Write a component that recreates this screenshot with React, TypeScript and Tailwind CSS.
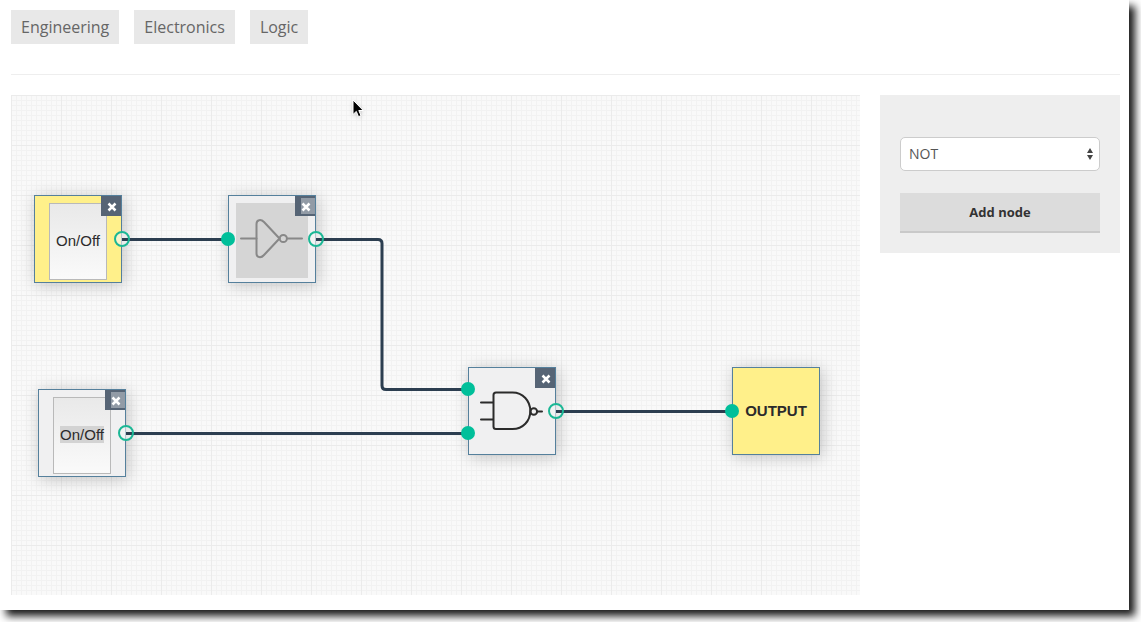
import { useState } from "react";
import clsx from "clsx";

type Kind = "switch" | "not" | "nand" | "output";

interface GateNode {
  id: string;
  kind: Kind;
  x: number;
  y: number;
  on?: boolean;
  selected?: boolean;
}

const initialNodes: GateNode[] = [
  { id: "a", kind: "switch", x: 23, y: 100, on: true },
  { id: "b", kind: "switch", x: 27, y: 294, selected: true },
  { id: "not", kind: "not", x: 217, y: 100, selected: true },
  { id: "nand", kind: "nand", x: 457, y: 272 },
  { id: "out", kind: "output", x: 721, y: 272, on: true },
];

const wires = [
  "M111 144.5H217",
  "M305 144.5H367Q371 144.5 371 148.5V290.5Q371 294.5 375 294.5H457",
  "M115 338.5H457",
  "M545 316.5H721",
];

const inputs = [
  [217, 144],
  [457, 294],
  [457, 338],
  [721, 316],
];

const outputs = [
  [111, 144],
  [115, 338],
  [305, 144],
  [545, 316],
];

function NotIcon() {
  return (
    <svg viewBox="8 8 72 75" className="h-[75px] w-[72px]" fill="none" stroke="#888" strokeWidth="2" strokeLinecap="round" strokeLinejoin="round">
      <path d="M13 43.5H28.5M59 43.5H74" />
      <path d="M28.5 29C28.5 24.5 33 24 36 27L51.5 43.5L36 60C33 63.5 28.5 62.5 28.5 58.5Z" />
      <circle cx="55.3" cy="43.5" r="3.6" />
    </svg>
  );
}

function NandIcon() {
  return (
    <svg viewBox="8 8 72 75" className="h-[75px] w-[72px]" fill="none" stroke="#2b2b2b" strokeWidth="2" strokeLinecap="round" strokeLinejoin="round">
      <path d="M13 35.5H25M13 52.5H25M69.5 44.5H74" />
      <path d="M28 25.5H44.5C55 25.5 62.3 34 62.3 44C62.3 54 55 62 44.5 62H28Q25.5 62 25.5 59.5V28Q25.5 25.5 28 25.5Z" />
      <circle cx="65.8" cy="44.5" r="3.3" />
    </svg>
  );
}

interface NodeBoxProps {
  node: GateNode;
  onToggle: () => void;
  onRemove: () => void;
}

function NodeBox({ node, onToggle, onRemove }: NodeBoxProps) {
  return (
    <div
      className={clsx(
        "absolute flex size-[88px] justify-center border border-[#55809c] shadow-[2px_2px_16px_rgba(0,0,0,0.22)]",
        node.on ? "bg-[#fff08a]" : "bg-[#f0f0f1]",
        node.kind === "output" ? "items-center" : "pt-[7px]"
      )}
      style={{ left: node.x, top: node.y }}
    >
      {node.kind === "switch" && (
        <button
          type="button"
          onClick={onToggle}
          className="h-[77px] w-[58px] border border-[#b9b9b9] bg-linear-to-b from-[#e9e9e9] to-[#fafafa] pb-[2px] text-[15px] leading-4 text-[#2b2b2b]"
        >
          <span className={clsx(node.selected && "bg-[#d3d3d3]")}>On/Off</span>
        </button>
      )}
      {node.kind === "not" && (
        <div className={clsx("h-[75px]", node.selected && "bg-[#d5d5d5]")}>
          <NotIcon />
        </div>
      )}
      {node.kind === "nand" && <NandIcon />}
      {node.kind === "output" && (
        <strong className="text-[15px] leading-5 text-[#2b2b2b]">OUTPUT</strong>
      )}

      {node.kind !== "output" && (
        <button
          type="button"
          aria-label="Remove node"
          onClick={onRemove}
          className="absolute top-0 right-0 flex size-5 justify-end bg-[#566475]"
        >
          <span
            className={clsx(
              "flex h-4 w-[14px] items-center self-center pt-[2px]",
              node.selected && "bg-[#929ba6]"
            )}
          >
            <svg viewBox="0 0 10 10" className="size-[10px]" stroke="#fff" strokeWidth="2.5">
              <path d="M1.500 1.500L8.500 8.500M8.500 1.500L1.500 8.500" />
            </svg>
          </span>
        </button>
      )}
    </div>
  );
}

function Canvas({ nodes, setNodes }: { nodes: GateNode[]; setNodes: (n: GateNode[]) => void }) {
  return (
    <main className="relative h-[500px] min-w-0 flex-1 bg-[#f9f9f9] bg-[linear-gradient(#ebebeb_1px,transparent_1px),linear-gradient(90deg,#ebebeb_1px,transparent_1px),linear-gradient(#f2f2f2_1px,transparent_1px),linear-gradient(90deg,#f2f2f2_1px,transparent_1px)] bg-[size:50px_50px,50px_50px,5px_5px,5px_5px] font-['Liberation_Sans',Arial,sans-serif]">
      {nodes.map((node) => (
        <NodeBox
          key={node.id}
          node={node}
          onToggle={() => setNodes(nodes.map((n) => (n.id === node.id ? { ...n, on: !n.on } : n)))}
          onRemove={() => setNodes(nodes.filter((n) => n.id !== node.id))}
        />
      ))}

      {/* Wires and ports */}
      <svg className="pointer-events-none absolute inset-0 size-full" fill="none">
        {outputs.map(([x, y]) => (
          <circle key={`${x}-${y}`} cx={x} cy={y} r="7" fill="#f5f5f5" fillOpacity="0.6" />
        ))}
        {wires.map((d) => (
          <path key={d} d={d} stroke="#2c3e50" strokeWidth="3" />
        ))}
        {outputs.map(([x, y]) => (
          <circle key={`${x}-${y}-ring`} cx={x} cy={y} r="7" stroke="#1bb795" strokeWidth="2" />
        ))}
        {inputs.map(([x, y]) => (
          <circle key={`${x}-${y}`} cx={x} cy={y} r="7" fill="#00bf9a" />
        ))}
      </svg>

      {/* Pointer */}
      <svg viewBox="0 0 12 19" className="pointer-events-none absolute top-1 left-[341px] h-[19px] w-3 drop-shadow-sm">
        <path d="M1 1V15.5L4.3 12.4L6.5 17.7L9 16.6L6.8 11.5H11.3Z" fill="#000" stroke="#fff" />
      </svg>
    </main>
  );
}

export default function App() {
  const [nodes, setNodes] = useState(initialNodes);
  const [kind, setKind] = useState("not");

  const addNode = () => {
    const id = `${kind}-${nodes.length}-${Date.now()}`;
    setNodes([...nodes, { id, kind: kind as Kind, x: 300, y: 20 }]);
  };

  return (
    <div className="overflow-hidden bg-white pb-3 font-['Open_Sans',sans-serif]">
      <div className="mr-3 bg-white pt-[10px] pr-[9px] pb-[15px] pl-[11px] shadow-[6px_6px_8px_rgba(0,0,0,0.9)]">
        <nav className="flex gap-[15px] border-b border-[#eee] pb-[30px] text-[16px] leading-[34px] text-[#666]">
          {["Engineering", "Electronics", "Logic"].map((tag) => (
            <a key={tag} href="#" className="bg-[#e8e8e8] px-[10px]">
              {tag}
            </a>
          ))}
        </nav>

        <div className="mt-5 flex items-start gap-5">
          <Canvas nodes={nodes} setNodes={setNodes} />

          <aside className="w-60 bg-[#eee] px-5 pt-[42px] pb-5">
            <div className="relative">
              <select
                aria-label="Node type"
                value={kind}
                onChange={(e) => setKind(e.target.value)}
                className="block h-[34px] w-full appearance-none rounded-[5px] border border-[#ccc] bg-white px-2 pb-[2px] text-[14px] text-[#555]"
              >
                <option value="not">NOT</option>
                <option value="nand">NAND</option>
                <option value="switch">SWITCH</option>
              </select>
              <svg viewBox="0 0 6 12" className="pointer-events-none absolute top-[11px] right-[7px] h-3 w-[6px]" fill="#444">
                <path d="M3 0L6 5H0ZM3 12L0 7H6Z" />
              </svg>
            </div>
            <button
              type="button"
              onClick={addNode}
              className="mt-[22px] block h-10 w-full border-b-2 border-[#c9c9c9] bg-[#dcdcdc] pt-[2px] text-[13px] font-bold text-[#333]"
            >
              Add node
            </button>
          </aside>
        </div>
      </div>
    </div>
  );
}
